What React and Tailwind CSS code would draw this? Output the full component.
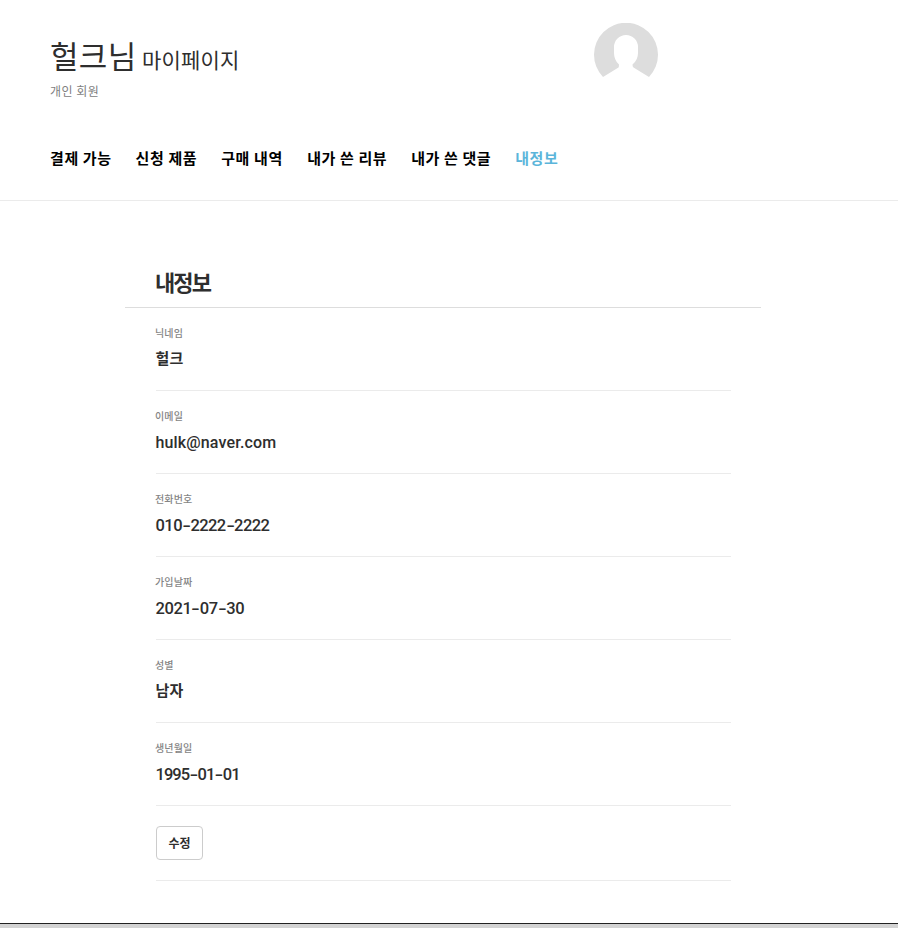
import React from "react";

const navItems = [
  { label: "결제 가능", width: "w-[61.6px]" },
  { label: "신청 제품", width: "w-[61.6px]" },
  { label: "구매 내역", width: "w-[62px]" },
  { label: "내가 쓴 리뷰", width: "w-[80px]" },
  { label: "내가 쓴 댓글", width: "w-[80px]" },
  { label: "내정보", width: "w-[44px]", active: true },
];

const hangul = "mt-[6px] text-[15px] font-bold tracking-[0.2px]";

const fields = [
  { label: "닉네임", value: "헐크", style: hangul },
  { label: "이메일", value: "hulk@naver.com", style: "mt-[7px] text-[16px] font-medium tracking-[0.15px]" },
  { label: "전화번호", value: "010-2222-2222", style: "mt-[7px] text-[16.5px] font-medium tracking-[-0.55px]" },
  { label: "가입날짜", value: "2021-07-30", style: "mt-[7px] text-[16.5px] font-medium tracking-[-0.4px]" },
  { label: "성별", value: "남자", style: hangul },
  { label: "생년월일", value: "1995-01-01", style: "mt-[7px] text-[16.5px] font-medium tracking-[-0.95px]" },
];

function Value({ text }) {
  return text.split("-").map((part, i) => (
    <React.Fragment key={i}>
      {i > 0 && <span className="inline-block w-[8.4px] scale-x-150 text-center">-</span>}
      {part}
    </React.Fragment>
  ));
}

function Avatar() {
  return (
    <svg className="mt-[23px] h-16 w-16" viewBox="0 0 64 64" fill="#dddddd">
      <path d="M9 54A32 32 0 1 1 55 54L39.5 44.5Q38.5 43.8 38.5 41.5Q44 37 44 30V24A12 12 0 0 0 20 24V30Q20 37 25 41.5Q25 43.8 24.5 44.5Z" />
    </svg>
  );
}

export default function App() {
  return (
    <div className="flex h-[928px] w-[898px] flex-col overflow-hidden whitespace-nowrap bg-white font-['Noto_Sans_CJK_KR',sans-serif] text-[#2e2e2e]">
      <header className="h-[201px] shrink-0 border-b border-[#ebebeb] pl-[50px]">
        <div className="flex h-[140px]">
          <div className="w-[544px] pt-[33px]">
            <h1 className="flex h-[44px] items-baseline leading-[44px]">
              <span className="w-[92px] text-[31px] font-normal tracking-[0.3px]">헐크님</span>
              <span className="text-[21px] font-normal tracking-[0.2px]">마이페이지</span>
            </h1>
            <p className="mt-[5px] text-[12px] leading-[18px] tracking-[0.5px] text-[#808080]">개인 회원</p>
          </div>
          <Avatar />
        </div>
        <nav className="flex gap-6 pt-[6px] text-[15px] font-bold leading-6 text-black">
          {navItems.map((item) => (
            <a
              key={item.label}
              className={`${item.width} tracking-[0.6px] ${item.active ? "text-[#5bb5da]" : ""}`}
            >
              {item.label}
            </a>
          ))}
        </nav>
      </header>
      <main className="ml-[125px] mt-[58px] w-[636px]">
        <h2 className="h-[49px] border-b border-[#dddddd] pl-[30px] text-[22px] font-bold leading-[44px] tracking-[-1.9px]">
          내정보
        </h2>
        <dl className="ml-[31px] w-[575px]">
          {fields.map((field) => (
            <div key={field.label} className="h-[83px] border-b border-[#ebebeb] pt-[18px]">
              <dt className="-ml-px h-[15px] text-[10px] font-medium leading-[14px] tracking-[0.15px] text-[#858585]">
                {field.label}
              </dt>
              <dd className={`h-6 font-['Roboto','Noto_Sans_CJK_KR',sans-serif] leading-6 -ml-[0.5px] ${field.style}`}>
                <Value text={field.value} />
              </dd>
            </div>
          ))}
        </dl>
        <div className="ml-[31px] h-[75px] w-[575px] border-b border-[#ebebeb] pt-5">
          <button className="h-[34px] w-[47px] rounded-[4px] border border-[#cccccc] pb-px text-[12px] font-bold leading-[28px]">
            수정
          </button>
        </div>
      </main>
      <footer className="mt-[42px] h-[5px] shrink-0 border-t border-[#222] bg-[#d3d3d3]" />
    </div>
  );
}
